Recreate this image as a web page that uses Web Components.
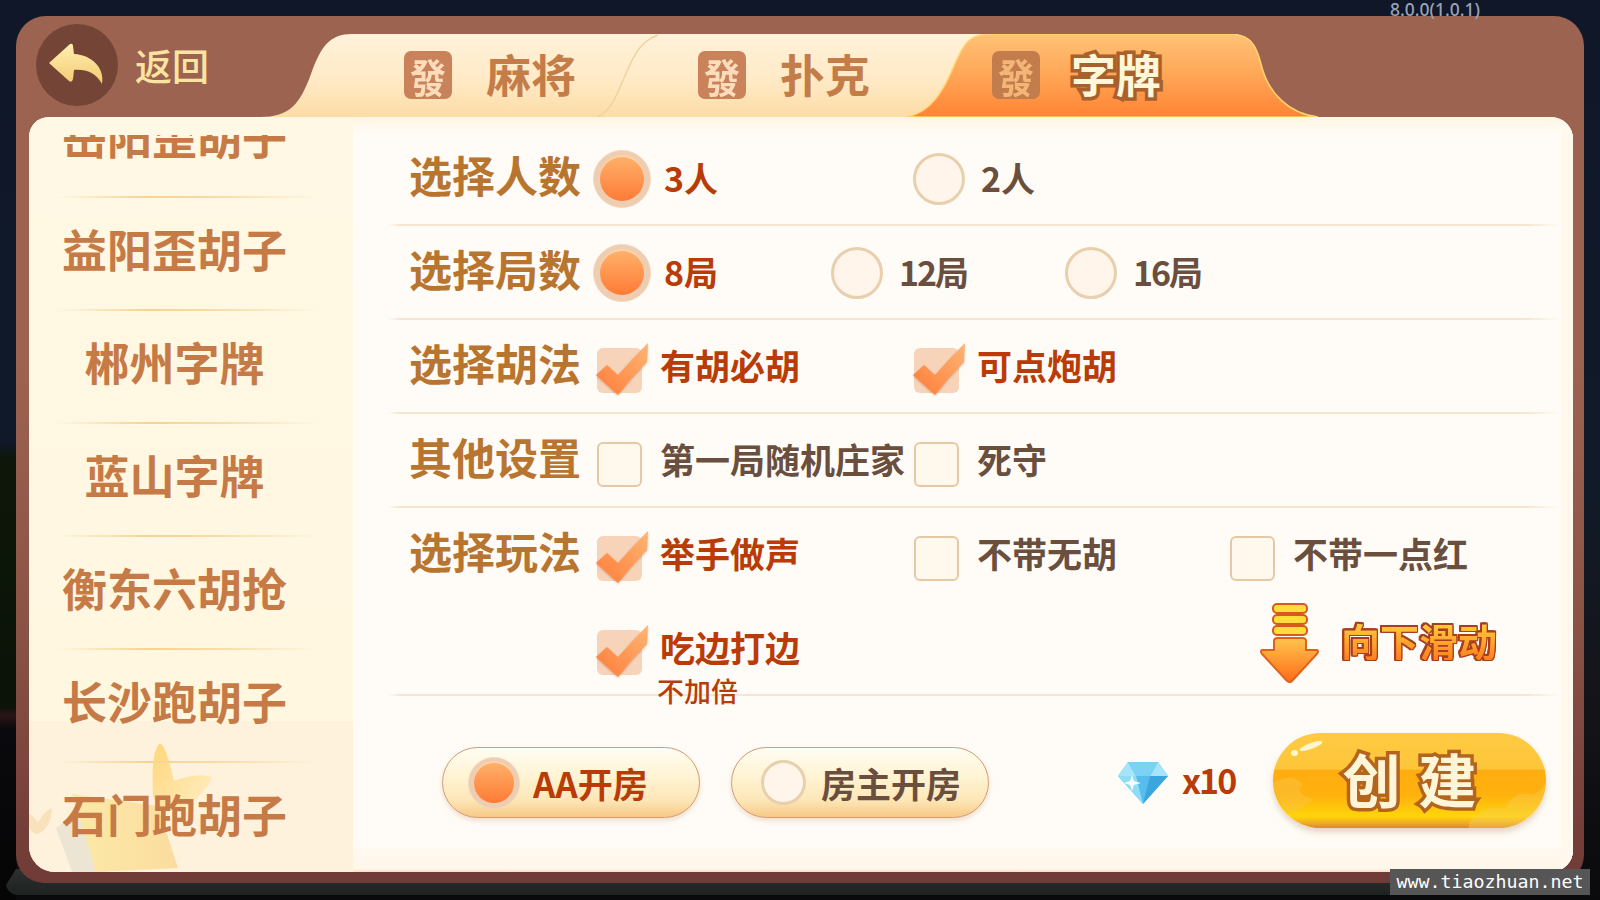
<!DOCTYPE html>
<html lang="zh-CN">
<head>
<meta charset="utf-8">
<title>创建房间</title>
<style>
	html, body { margin: 0; height: 100%; }
	body {
		width: 1600px; height: 900px; overflow: hidden; box-sizing: border-box;
		padding: 16px 16px 0;
		background:
			linear-gradient(#0f1729 0, #10192a 49%, #0d1609 51%, #0b1308 78.5%, #2a1518 79.5%, #0a090d 81%, #050505 100%) 0 0 / 16px 100% no-repeat,
			linear-gradient(#0f1729 0, #111a28 55%, #15151b 75%, #0a0a0c 100%);
		font-family: "Noto Sans CJK SC", "Noto Sans", sans-serif;
	}
</style>
</head>
<body>
<game-panel>
	<back-button slot="head">返回</back-button>
	<tab-bar slot="head">
		<game-tab>麻将</game-tab>
		<game-tab>扑克</game-tab>
		<game-tab active>字牌</game-tab>
	</tab-bar>

	<side-list slot="side">
		<side-item>岳阳歪胡子</side-item>
		<side-item>益阳歪胡子</side-item>
		<side-item>郴州字牌</side-item>
		<side-item>蓝山字牌</side-item>
		<side-item>衡东六胡抢</side-item>
		<side-item>长沙跑胡子</side-item>
		<side-item>石门跑胡子</side-item>
	</side-list>

	<option-row label="选择人数">
		<radio-opt on style="--w:317px">3人</radio-opt>
		<radio-opt>2人</radio-opt>
	</option-row>
	<option-row label="选择局数">
		<radio-opt on style="--w:235px">8局</radio-opt>
		<radio-opt style="--w:234px;letter-spacing:-2px">12局</radio-opt>
		<radio-opt style="letter-spacing:-2px">16局</radio-opt>
	</option-row>
	<option-row label="选择胡法">
		<check-opt on style="--w:317px">有胡必胡</check-opt>
		<check-opt on>可点炮胡</check-opt>
	</option-row>
	<option-row label="其他设置">
		<check-opt style="--w:317px">第一局随机庄家</check-opt>
		<check-opt>死守</check-opt>
	</option-row>
	<option-row label="选择玩法" plain>
		<check-opt on style="--w:317px">举手做声</check-opt>
		<check-opt style="--w:316px">不带无胡</check-opt>
		<check-opt>不带一点红</check-opt>
	</option-row>
	<option-row>
		<check-opt on sub="不加倍" style="--w:667px">吃边打边</check-opt>
		<scroll-hint>向下滑动</scroll-hint>
	</option-row>

	<bottom-bar>
		<room-button on>AA开房</room-button>
		<room-button>房主开房</room-button>
		<gem-cost>x10</gem-cost>
		<create-button>创建</create-button>
	</bottom-bar>
</game-panel>
<screen-tag kind="version">8.0.0(1.0.1)</screen-tag>
<screen-tag kind="mark">www.tiaozhuan.net</screen-tag>

<script>
class GamePanel extends HTMLElement {
	constructor() {
		super();
		this.attachShadow({ mode: 'open' });
		this.shadowRoot.innerHTML = `
			<style>
				:host {
					display: block; position: relative; box-sizing: border-box;
					width: 1568px; height: 867px; padding: 0 11px 11px 13px;
					border-radius: 30px 30px 28px 28px;
					background: linear-gradient(#9c6350 0, #9c6350 40%, #8a5346 70%, #703a36 100%);
				}
				.plate {
					position: absolute; z-index: -1; left: -10px; right: -4px; bottom: -12px; height: 26px;
					background: linear-gradient(#2c2f2e, #1e2221); border-radius: 0 0 12px 12px;
					clip-path: polygon(10px 0, 100% 0, 100% 100%, 0 100%, 0 16px);
				}
				.head { display: flex; height: 101px; margin-left: -1px; }
				.body {
					display: flex; height: 755px; border-radius: 20px 22px 22px 26px; overflow: hidden;
					background: #fffcf7;
				}
				.main {
					flex: 1; box-sizing: border-box; padding: 15px 13px 0 35px;
					background:
						linear-gradient(0deg, #f7dcc6 0, #fff6ea 3px, #fff9f0 24px, transparent 25px),
						linear-gradient(#fff5e3 0, #fffcf7 18px);
					box-shadow: inset -12px 0 0 #fff8ec;
				}
			</style>
			<div class="plate"></div>
			<div class="head"><slot name="head"></slot></div>
			<div class="body">
				<slot name="side"></slot>
				<div class="main"><slot></slot></div>
			</div>
		`;
	}
}

class BackButton extends HTMLElement {
	constructor() {
		super();
		this.attachShadow({ mode: 'open' });
		this.shadowRoot.innerHTML = `
			<style>
				:host {
					display: flex; align-items: center; width: 232px; height: 101px;
					padding: 0 0 4px 8px; box-sizing: border-box; flex: none;
					color: #fbe3a2; font-size: 37px; font-weight: 500;
				}
				.disc {
					width: 82px; height: 82px; border-radius: 50%; background: #744536; margin-right: 17px; flex: none;
				}
				svg { display: block; }
			</style>
			<div class="disc">
				<svg width="82" height="82" viewBox="0 0 82 82">
					<defs><linearGradient id="arrow" x1="0" y1="0" x2="0" y2="1">
						<stop offset="0" stop-color="#ffefb0"/><stop offset="1" stop-color="#f3cb72"/>
					</linearGradient></defs>
					<path fill="url(#arrow)" d="M13 39 L34 20 Q37 19 37 22 L38 30 C56 31 69 44 66 60 C60 49 50 45 38 46 L37 55 Q36 59 33 57 Z"/>
				</svg>
			</div>
			<slot></slot>
		`;
	}
}

class TabBar extends HTMLElement {
	constructor() {
		super();
		this.attachShadow({ mode: 'open' });
		this.shadowRoot.innerHTML = `
			<style>
				:host {
					display: flex; position: relative; box-sizing: border-box;
					width: 1060px; height: 83px; margin-top: 18px; padding-left: 144px;
				}
				svg { position: absolute; left: 0; top: 0; z-index: 0; }
				slot { position: relative; z-index: 1; }
			</style>
			<svg width="1060" height="83" viewBox="0 0 1060 83">
				<defs>
					<linearGradient id="base" x1="0" y1="0" x2="0" y2="1">
						<stop offset="0" stop-color="#fff2da"/><stop offset=".55" stop-color="#ffeac6"/><stop offset="1" stop-color="#fddca6"/>
					</linearGradient>
					<linearGradient id="hot" x1="0" y1="0" x2="0" y2="1">
						<stop offset="0" stop-color="#ffc277"/><stop offset=".5" stop-color="#ffa656"/><stop offset="1" stop-color="#ff8434"/>
					</linearGradient>
				</defs>
				<path fill="url(#base)" d="M0 83 C30 83 40 70 51 40 C61 12 70 0 92 0 L760 0 L760 83 Z"/>
				<path fill="none" stroke="#f0d4a0" stroke-width="1.5" d="M398 1 C378 8 372 26 364 44 C356 62 352 76 337 83"/>
				<path fill="url(#hot)" stroke="#ffd56f" stroke-width="1.5" d="M647 83 C670 78 682 60 693 34 C704 8 710 0 730 0 L968 0 C990 0 996 10 1001 30 C1008 60 1030 80 1058 83 Z"/>
			</svg>
			<slot></slot>
		`;
	}
}

class GameTab extends HTMLElement {
	constructor() {
		super();
		this.attachShadow({ mode: 'open' });
		this.shadowRoot.innerHTML = `
			<style>
				:host {
					display: flex; align-items: center; position: relative; z-index: 1;
					width: 294px; height: 83px; padding-bottom: 1px; box-sizing: border-box;
					color: #c47c48; font-size: 45px; font-weight: 700; line-height: 1;
				}
				.tile {
					width: 48px; height: 48px; border-radius: 7px; margin: 0 34px 0 0;
					background: #c9825a; color: #fbdcbb; font-size: 36px; font-weight: 700;
					display: flex; align-items: center; justify-content: center;
				}
				.tile span { transform: scaleY(1.12); }
				.label { margin-top: -4px; }
				:host([active]) { color: #fff7da; }
				:host([active]) .tile { background: #c37c4c; color: #f3b678; }
				:host([active]) .label { margin-left: -3px; -webkit-text-stroke: 7px #a9602c; paint-order: stroke fill; }
			</style>
			<span class="tile"><span>發</span></span>
			<span class="label"><slot></slot></span>
		`;
	}
}

class SideList extends HTMLElement {
	constructor() {
		super();
		this.attachShadow({ mode: 'open' });
		this.shadowRoot.innerHTML = `
			<style>
				:host {
					display: block; position: relative; overflow: hidden; flex: none; box-sizing: border-box;
					width: 324px; height: 755px; padding-top: 18px;
					background: linear-gradient(#fff8e4 0, #fff7e0 80%, #fff2dc 80%, #fff2dc 100%);
				}
				.scroll { position: relative; z-index: 1; height: 737px; overflow: hidden; }
				.inner { margin-top: -50px; margin-left: -1px; }
				svg { position: absolute; left: -13px; bottom: 0; }
			</style>
			<svg width="220" height="150" viewBox="28 722 220 150">
				<defs>
					<linearGradient id="wing" x1="0" y1="0" x2="1" y2="1">
						<stop offset="0" stop-color="#ffd67a"/><stop offset="1" stop-color="#ffeec4"/>
					</linearGradient>
					<linearGradient id="book" x1="0" y1="0" x2="1" y2="0">
						<stop offset="0" stop-color="#fbe9a6"/><stop offset="1" stop-color="#fcdca0"/>
					</linearGradient>
				</defs>
				<path fill="#ede5d4" d="M68 828 L84 872 L118 872 L92 810 Z"/>
				<path fill="url(#book)" d="M84 794 L170 806 L190 868 L108 872 Z"/>
				<path fill="url(#wing)" d="M172 743 C180 750 183 770 186 781 C198 776 212 773 224 777 C218 792 204 806 186 810 C176 812 167 806 165 795 C164 775 164 750 172 743 Z"/>
				<path fill="#f8e2bc" d="M35 812 C42 812 47 818 50 822 C54 816 58 810 64 808 C64 820 58 833 48 834 C42 833 38 822 35 812 Z"/>
			</svg>
			<div class="scroll"><div class="inner"><slot></slot></div></div>
		`;
	}
}

class SideItem extends HTMLElement {
	constructor() {
		super();
		this.attachShadow({ mode: 'open' });
		this.shadowRoot.innerHTML = `
			<style>
				:host {
					display: flex; align-items: center; justify-content: center; position: relative; box-sizing: border-box;
					width: 293px; height: 113px; padding-bottom: 12px;
					color: #c67a45; font-size: 45px; font-weight: 700; line-height: 1; white-space: nowrap;
				}
				.line {
					position: absolute; left: 28px; width: 264px; bottom: 0; height: 2px;
					background: linear-gradient(90deg, transparent, #f6d391 35%, #f8dba6 60%, transparent);
				}
			</style>
			<slot></slot>
			<div class="line"></div>
		`;
	}
}

class OptionRow extends HTMLElement {
	constructor() {
		super();
		this.attachShadow({ mode: 'open' });
	}

	connectedCallback() {
		this.shadowRoot.innerHTML = `
			<style>
				:host {
					display: flex; align-items: center; position: relative; box-sizing: border-box;
					height: 94px; padding-left: 21px;
				}
				.label {
					width: 184px; flex: none; margin-top: -9px;
					color: #b87530; font-size: 43px; font-weight: 700; line-height: 1; white-space: nowrap;
				}
				.line {
					position: absolute; left: 0; right: 0; bottom: 0; height: 2px;
					background: linear-gradient(90deg, transparent, #f5e6cd 1%, #f5e6cd 97%, transparent);
				}
				:host([plain]) .line { display: none; }
			</style>
			<div class="label">${this.getAttribute('label') || ''}</div>
			<slot></slot>
			<div class="line"></div>
		`;
	}
}

class RadioDot extends HTMLElement {
	constructor() {
		super();
		this.attachShadow({ mode: 'open' });
		this.shadowRoot.innerHTML = `
			<style>
				:host {
					display: block; box-sizing: border-box; flex: none; border-radius: 50%;
					width: var(--off, 52px); height: var(--off, 52px);
					background: #fff5ea; border: 3px solid #e8cfae;
				}
				:host([on]) {
					width: var(--on, 58px); height: var(--on, 58px);
					padding: var(--ring, 6px); border: 1px solid #f2d8c0;
					background: #eecdb1;
				}
				.core { display: none; width: 100%; height: 100%; border-radius: 50%; background: linear-gradient(#ffb06a, #ff7b36); box-shadow: 0 -2px 0 #ffd3a8; }
				:host([on]) .core { display: block; }
			</style>
			<div class="core"></div>
		`;
	}
}

class RadioOpt extends HTMLElement {
	constructor() {
		super();
		this.attachShadow({ mode: 'open' });
	}

	connectedCallback() {
		this.shadowRoot.innerHTML = `
			<style>
				:host {
					display: flex; align-items: center; gap: 13px; width: var(--w, auto); flex: none;
					color: #6b4f3e; font-size: 34px; font-weight: 700; line-height: 1; white-space: nowrap;
				}
				:host([on]) { color: #b93c08; }
				.box { width: 58px; height: 58px; display: flex; align-items: center; justify-content: center; }
				.text { margin-top: -2px; }
			</style>
			<div class="box"><radio-dot ${this.hasAttribute('on') ? 'on' : ''}></radio-dot></div>
			<span class="text"><slot></slot></span>
		`;
	}
}

class CheckOpt extends HTMLElement {
	constructor() {
		super();
		this.attachShadow({ mode: 'open' });
	}

	connectedCallback() {
		const on = this.hasAttribute('on');
		const sub = this.getAttribute('sub');
		this.shadowRoot.innerHTML = `
			<style>
				:host {
					display: flex; align-items: center; gap: 12px; width: var(--w, auto); flex: none;
					margin-left: -3px; margin-right: 3px;
					color: #6b4f3e; font-size: 35px; font-weight: 700; line-height: 1; white-space: nowrap;
				}
				:host([on]) { color: #b93c08; }
				.box { width: 58px; height: 52px; display: flex; align-items: center; justify-content: center; padding-top: 6px; }
				.tick {
					position: relative; box-sizing: border-box; width: 45px; height: 45px; border-radius: 6px;
					background: #fff9ed; border: 2px solid #e5c9a4;
				}
				:host([on]) .tick { background: #f6d3b9; border: 0; }
				svg { position: absolute; left: 0; top: 0; overflow: visible; filter: drop-shadow(0 1px 1px rgba(150,90,50,.35)); }
				.text { position: relative; z-index: 1; margin-top: -6px; }
				.sub { position: absolute; left: -3px; top: 100%; margin-top: 13px; font-size: 27px; font-weight: 500; }
			</style>
			<div class="box"><div class="tick">${on ? `
				<svg width="45" height="45" viewBox="0 0 45 45">
					<defs><linearGradient id="chk" x1="1" y1="0" x2="0" y2="1">
						<stop offset="0" stop-color="#ffb574"/><stop offset="1" stop-color="#ff7c38"/>
					</linearGradient></defs>
					<path fill="url(#chk)" d="M-1 27 L10 17 L21 27 Q36 10 51 -5 L50 14 Q34 30 21 47 Z"/>
				</svg>` : ''}</div></div>
			<span class="text"><slot></slot>${sub ? `<span class="sub">${sub}</span>` : ''}</span>
		`;
	}
}

class ScrollHint extends HTMLElement {
	constructor() {
		super();
		this.attachShadow({ mode: 'open' });
		this.shadowRoot.innerHTML = `
			<style>
				:host { display: flex; align-items: center; gap: 22px; flex: none; margin-top: -12px; }
				svg { display: block; flex: none; }
				.text {
					font-size: 39px; font-weight: 700; line-height: 1; white-space: nowrap;
					background: linear-gradient(#ffd23f, #ff7f1e); -webkit-background-clip: text; background-clip: text; color: transparent;
					filter: drop-shadow(1.5px 0 0 #a83e1e) drop-shadow(-1.5px 0 0 #a83e1e) drop-shadow(0 1.5px 0 #a83e1e) drop-shadow(0 -1.5px 0 #a83e1e);
					margin-top: -6px;
				}
			</style>
			<svg width="59" height="80" viewBox="0 0 59 80">
				<defs><linearGradient id="hint" x1="0" y1="0" x2="0" y2="1">
					<stop offset="0" stop-color="#ffc54e"/><stop offset="1" stop-color="#ff6c18"/>
				</linearGradient></defs>
				<g fill="#ffdd3a" stroke="#d8591d" stroke-width="2">
					<rect x="13" y="1" width="34" height="9" rx="4"/>
					<rect x="13" y="12" width="34" height="9" rx="4"/>
					<rect x="13" y="23" width="34" height="9" rx="4"/>
				</g>
				<path fill="url(#hint)" stroke="#e0601c" stroke-width="2" d="M14 38 Q14 35 18 35 L42 35 Q46 35 46 38 L46 47 L57 47 Q59 48 57 51 L32 78 Q30 80 27 78 L2 51 Q0 48 2 47 L14 47 Z"/>
			</svg>
			<span class="text"><slot></slot></span>
		`;
	}
}

class BottomBar extends HTMLElement {
	constructor() {
		super();
		this.attachShadow({ mode: 'open' });
		this.shadowRoot.innerHTML = `
			<style>
				:host { display: flex; align-items: flex-start; box-sizing: border-box; padding: 37px 0 0 54px; }
			</style>
			<slot></slot>
		`;
	}
}

class RoomButton extends HTMLElement {
	constructor() {
		super();
		this.attachShadow({ mode: 'open' });
	}

	connectedCallback() {
		const on = this.hasAttribute('on');
		this.shadowRoot.innerHTML = `
			<style>
				:host {
					display: flex; align-items: center; box-sizing: border-box; flex: none;
					width: 258px; height: 71px; margin: 14px 31px 0 0; padding-left: 29px; gap: 15px;
					border: 1.5px solid #d69a6f; border-radius: 36px;
					background: linear-gradient(#fffdf2 0, #fff4d4 40%, #fde7b8 75%, #f7c986 100%);
					box-shadow: 0 3px 5px rgba(190,140,90,.25);
					color: #6b4f3e; font-size: 35px; font-weight: 700; line-height: 1; white-space: nowrap;
					--off: 45px; --on: 52px; --ring: 5px;
				}
				:host([on]) { color: #b93c08; padding-left: 25px; gap: 13px; }
			</style>
			<radio-dot ${on ? 'on' : ''}></radio-dot>
			<span><slot></slot></span>
		`;
	}
}

class GemCost extends HTMLElement {
	constructor() {
		super();
		this.attachShadow({ mode: 'open' });
		this.shadowRoot.innerHTML = `
			<style>
				:host {
					display: flex; align-items: center; gap: 14px; flex: none; width: 118px; margin: 29px 37px 0 98px;
					color: #b93c08; font-size: 34px; font-weight: 700; line-height: 42px; letter-spacing: -2px;
				}
				svg { display: block; flex: none; }
				.text { margin-top: -6px; }
			</style>
			<svg width="50" height="42" viewBox="0 0 50 42">
				<path fill="#57bdec" d="M10 0 L40 0 L50 14 L25 42 L0 14 Z"/>
				<path fill="#a6e4fb" d="M10 0 L18 14 L0 14 Z M40 0 L32 14 L50 14 Z"/>
				<path fill="#7bd2f5" d="M10 0 L40 0 L32 14 L18 14 Z"/>
				<path fill="#3ba6de" d="M32 14 L50 14 L25 42 Z"/>
				<path fill="#8fdcf9" d="M0 14 L18 14 L25 42 Z"/>
				<path fill="#fff" d="M14 13 L16 19 L23 21 L16 23 L14 29 L12 23 L6 21 L12 19 Z" opacity=".9"/>
			</svg>
			<span class="text"><slot></slot></span>
		`;
	}
}

class CreateButton extends HTMLElement {
	constructor() {
		super();
		this.attachShadow({ mode: 'open' });
		this.shadowRoot.innerHTML = `
			<style>
				:host {
					display: flex; align-items: center; justify-content: center; position: relative; flex: none; overflow: hidden;
					width: 273px; height: 95px; border-radius: 48px;
					background: linear-gradient(#ffcb42 0, #fdc53a 38%, #ffad10 39%, #ffb10e 65%, #ffd50a 88%, #f4ae26 94%, #d18f2a 100%);
					box-shadow: 0 4px 6px rgba(170,120,70,.3);
					color: #fff6d8; font-size: 58px; font-weight: 700; line-height: 1; letter-spacing: 18px; text-indent: 18px;
				}
				.text { position: relative; -webkit-text-stroke: 7px #b3641f; paint-order: stroke fill; margin-top: -6px; }
				.shine {
					position: absolute; left: 26px; top: 10px; width: 24px; height: 6px; border-radius: 50%;
					background: #fff6cf; transform: rotate(-20deg);
				}
				.dot { position: absolute; left: 18px; top: 17px; width: 7px; height: 6px; border-radius: 50%; background: #fff6cf; }
				svg { position: absolute; left: 0; top: 0; }
			</style>
			<svg width="273" height="95" viewBox="0 0 273 95">
				<path fill="#f8c648" opacity=".45" d="M0 50 C14 42 24 44 30 52 C24 56 28 64 40 66 C30 74 22 82 14 78 C6 70 2 60 0 50 Z"/>
				<path fill="#f8cf5a" opacity=".4" d="M196 90 C204 78 220 72 232 76 C236 64 250 58 258 62 C268 60 273 50 273 50 L273 95 L196 95 Z"/>
			</svg>
			<span class="shine"></span><span class="dot"></span>
			<span class="text"><slot></slot></span>
		`;
	}
}

class ScreenTag extends HTMLElement {
	constructor() {
		super();
		this.attachShadow({ mode: 'open' });
		this.shadowRoot.innerHTML = `
			<style>
				:host { display: block; position: absolute; white-space: nowrap; }
				:host([kind="version"]) {
					left: 1390px; top: 0; color: #9aa3b5; font: 500 17.5px/18px "Noto Sans", sans-serif;
				}
				:host([kind="mark"]) {
					left: 1390px; top: 869px; width: 200px; height: 26px; text-align: center;
					background: #565656; color: #fff; font: 18.3px/26px "DejaVu Sans Mono", monospace;
				}
			</style>
			<slot></slot>
		`;
	}
}

customElements.define('radio-dot', RadioDot);
customElements.define('game-panel', GamePanel);
customElements.define('back-button', BackButton);
customElements.define('tab-bar', TabBar);
customElements.define('game-tab', GameTab);
customElements.define('side-list', SideList);
customElements.define('side-item', SideItem);
customElements.define('option-row', OptionRow);
customElements.define('radio-opt', RadioOpt);
customElements.define('check-opt', CheckOpt);
customElements.define('scroll-hint', ScrollHint);
customElements.define('bottom-bar', BottomBar);
customElements.define('room-button', RoomButton);
customElements.define('gem-cost', GemCost);
customElements.define('create-button', CreateButton);
customElements.define('screen-tag', ScreenTag);
</script>
</body>
</html>
